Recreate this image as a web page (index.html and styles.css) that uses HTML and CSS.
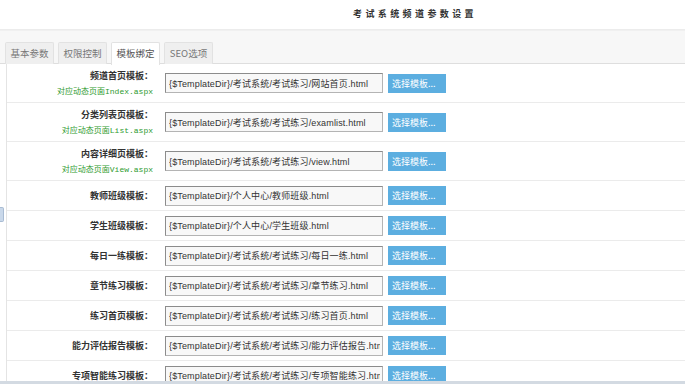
FILE: index.html
```html
<!DOCTYPE html>
<html lang="zh-CN">
<head>
    <meta charset="UTF-8">
    <title>考试系统频道参数设置</title>
    <link rel="stylesheet" href="styles.css">
</head>
<body>
    <div class="header">
        <h1 class="title">考试系统频道参数设置</h1>
    </div>

    <div class="tabbar">
        <span class="tab">基本参数</span>
        <span class="tab">权限控制</span>
        <span class="tab active">模板绑定</span>
        <span class="tab">SEO选项</span>
    </div>

    <div class="panel">
        <table class="form-table">
            <tr class="tall">
                <td class="label">频道首页模板：<br><span class="hint">对应动态页面<span class="mono">Index.aspx</span></span></td>
                <td class="field"><input class="tpl-input" type="text" value="{$TemplateDir}/考试系统/考试练习/网站首页.html"><button class="tpl-btn">选择模板...</button></td>
            </tr>
            <tr class="tall">
                <td class="label">分类列表页模板：<br><span class="hint">对应动态页面<span class="mono">List.aspx</span></span></td>
                <td class="field"><input class="tpl-input" type="text" value="{$TemplateDir}/考试系统/考试练习/examlist.html"><button class="tpl-btn">选择模板...</button></td>
            </tr>
            <tr class="tall">
                <td class="label">内容详细页模板：<br><span class="hint">对应动态页面<span class="mono">View.aspx</span></span></td>
                <td class="field"><input class="tpl-input" type="text" value="{$TemplateDir}/考试系统/考试练习/view.html"><button class="tpl-btn">选择模板...</button></td>
            </tr>
            <tr>
                <td class="label">教师班级模板：</td>
                <td class="field"><input class="tpl-input" type="text" value="{$TemplateDir}/个人中心/教师班级.html"><button class="tpl-btn">选择模板...</button></td>
            </tr>
            <tr>
                <td class="label">学生班级模板：</td>
                <td class="field"><input class="tpl-input" type="text" value="{$TemplateDir}/个人中心/学生班级.html"><button class="tpl-btn">选择模板...</button></td>
            </tr>
            <tr>
                <td class="label">每日一练模板：</td>
                <td class="field"><input class="tpl-input" type="text" value="{$TemplateDir}/考试系统/考试练习/每日一练.html"><button class="tpl-btn">选择模板...</button></td>
            </tr>
            <tr>
                <td class="label">章节练习模板：</td>
                <td class="field"><input class="tpl-input" type="text" value="{$TemplateDir}/考试系统/考试练习/章节练习.html"><button class="tpl-btn">选择模板...</button></td>
            </tr>
            <tr>
                <td class="label">练习首页模板：</td>
                <td class="field"><input class="tpl-input" type="text" value="{$TemplateDir}/考试系统/考试练习/练习首页.html"><button class="tpl-btn">选择模板...</button></td>
            </tr>
            <tr>
                <td class="label">能力评估报告模板：</td>
                <td class="field"><input class="tpl-input" type="text" value="{$TemplateDir}/考试系统/考试练习/能力评估报告.html"><button class="tpl-btn">选择模板...</button></td>
            </tr>
            <tr>
                <td class="label">专项智能练习模板：</td>
                <td class="field"><input class="tpl-input" type="text" value="{$TemplateDir}/考试系统/考试练习/专项智能练习.html"><button class="tpl-btn">选择模板...</button></td>
            </tr>
        </table>
    </div>

    <div class="split-handle"></div>
    <div class="scroll-strip"></div>
</body>
</html>
```

FILE: styles.css
```css
body {
    margin: 0;
    background: #fff;
    font-family: "Liberation Sans", "Noto Sans CJK SC", sans-serif;
    color: #333;
    overflow: hidden;
    height: 384px;
}

.header {
    height: 29px;
    border-bottom: 1px solid #ececec;
}

.title {
    margin: 0;
    padding: 9px 0 0 353px;
    font-family: "Noto Sans CJK SC", sans-serif;
    font-size: 9px;
    line-height: 10px;
    font-weight: bold;
    letter-spacing: 3.4px;
    color: #333;
}

.tabbar {
    display: flex;
    gap: 4px;
    padding: 11px 0 0 5px;
    height: 21px;
    background: #f7f7f7;
    border-top: 1px solid #f0f0f0;
    border-bottom: 1px solid #dedede;
}

.tab {
    width: 47px;
    height: 21px;
    line-height: 21px;
    text-align: center;
    font-family: "Noto Sans CJK SC", sans-serif;
    font-size: 9.5px;
    color: #777;
    background: #efefef;
    border: 1px solid #e2e2e2;
    border-bottom: none;
    border-radius: 2px 2px 0 0;
}

.tab.active {
    background: #fff;
    color: #555;
    height: 22px;
    margin-bottom: -1px;
}

.panel {
    margin-left: 6px;
    border-left: 1px solid #e4e4e4;
}

.form-table {
    width: 100%;
    border-collapse: collapse;
}

.form-table td {
    border-bottom: 1px solid #ebebeb;
    padding: 4.1px 0;
    vertical-align: middle;
}

.form-table tr.tall td {
    padding: 3.5px 0;
}

.label {
    width: 146px;
    padding-right: 2px !important;
    text-align: right;
    font-family: "Noto Sans CJK SC", sans-serif;
    font-size: 9px;
    line-height: 15px;
    font-weight: bold;
    color: #333;
}

.hint {
    font-size: 8px;
    font-weight: normal;
    color: #2e9a2e;
}

.mono {
    font-family: "Liberation Mono", monospace;
}

.field {
    padding-left: 10px !important;
    white-space: nowrap;
    line-height: 20px;
}

.tpl-input {
    box-sizing: border-box;
    width: 218px;
    height: 20px;
    margin: 0;
    padding: 0 2px 0 3px;
    vertical-align: middle;
    font-family: "Liberation Sans", "Noto Sans CJK SC", sans-serif;
    font-size: 9px;
    letter-spacing: 0.15px;
    color: #333;
    background: #f8f8f8;
    border: 1px solid #b4b4b4;
    border-top-color: #8c8c8c;
    border-left-color: #8c8c8c;
    outline: none;
}

.tpl-btn {
    box-sizing: border-box;
    width: 58px;
    height: 19px;
    margin: 0 0 0 5px;
    padding: 0 0 0 4px;
    vertical-align: middle;
    text-align: left;
    font-family: "Noto Sans CJK SC", sans-serif;
    font-size: 9px;
    color: #fff;
    background: #5caee0;
    border: none;
}

.split-handle {
    position: absolute;
    left: 0;
    top: 207px;
    width: 3px;
    height: 13px;
    background: #c9d8ea;
    border: 1px solid #a9bcd3;
    border-left: none;
    border-radius: 0 2px 2px 0;
}

.scroll-strip {
    position: fixed;
    left: 0;
    right: 0;
    bottom: 0;
    height: 3px;
    background: #d3dae2;
}
```
